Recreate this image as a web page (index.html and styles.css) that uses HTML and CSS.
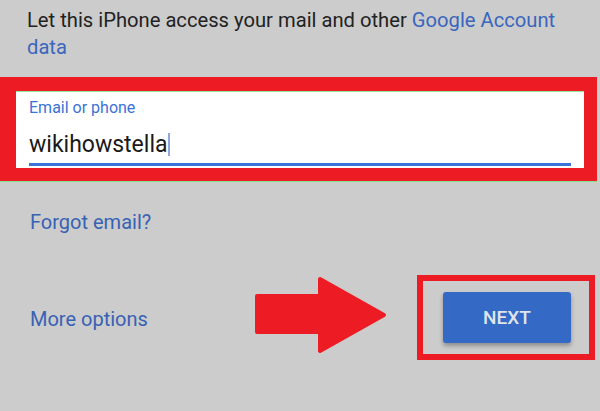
FILE: index.html
```html
<!DOCTYPE html>
<html lang="en">
<head>
  <meta charset="UTF-8">
  <title>Sign in</title>
  <link rel="stylesheet" href="styles.css">
</head>
<body>
  <p class="intro">Let this iPhone access your mail and other <a href="#">Google Account</a><br><a href="#">data</a></p>

  <div class="highlight">
    <div class="field">
      <label for="email">Email or phone</label>
      <div class="value"><span id="email">wikihowstella</span><span class="caret"></span></div>
    </div>
  </div>

  <a class="link forgot" href="#">Forgot email?</a>

  <div class="actions">
    <a class="link more" href="#">More options</a>
    <svg class="arrow" width="134" height="82" viewBox="0 0 134 82">
      <path d="M3 21 H66 V4 L130 40 L66 76 V57 H3 Z" fill="#ed1c24" stroke="#ed1c24" stroke-width="4" stroke-linejoin="round"/>
    </svg>
    <div class="next-box">
      <button class="next">NEXT</button>
    </div>
  </div>
</body>
</html>
```

FILE: styles.css
```css
html, body { margin: 0; }
body { width: 600px; height: 411px; overflow: hidden; background: #cccccc; font-family: Roboto, "Liberation Sans", sans-serif; }
a { text-decoration: none; color: #3762b4; }

.intro { margin: 0; padding: 7px 30px 0 27px; font-size: 20.2px; line-height: 27px; color: #222; }
.intro a { color: #3a66bd; }

.highlight { margin: 16px 3px 0 0; padding: 14px 13px 13px 16px; background: #ed1c24; border-bottom: 1px solid #86e38a; }
.field { height: 76px; background: #fff; border-top: 1px solid #9be49b; padding: 0 13px 0 13px; }
.field label { display: block; padding-top: 6px; font-size: 16px; line-height: 20px; color: #3b72d6; }
.value { display: flex; align-items: flex-end; height: 36px; margin-top: 5px; padding-bottom: 4px; border-bottom: 3px solid #3b73d9; font-size: 23px; line-height: 28px; color: #1a1a1a; }
.caret { width: 2px; height: 23px; margin: 0 0 3px 1px; background: #8fa9e0; }

.link { display: block; margin-left: 30px; font-size: 20px; color: #3762b4; }
.forgot { margin-top: 28px; line-height: 24px; }

.actions { display: flex; align-items: flex-start; margin-top: 41px; }
.more { margin: 32px 0 0 30px; width: 224px; line-height: 24px; }
.arrow { display: block; }
.next-box { margin-left: 29px; width: 166px; height: 73px; border: 6px solid #ed1c24; }
.next { display: block; margin: 11px 0 0 20px; width: 128px; height: 51px; border: 0; border-radius: 3px; background: #3469c6; color: #dfe4ec; font-family: Roboto, "Liberation Sans", sans-serif; font-weight: 500; font-size: 19px; box-shadow: 0 3px 4px rgba(0,0,0,0.3); }
```
